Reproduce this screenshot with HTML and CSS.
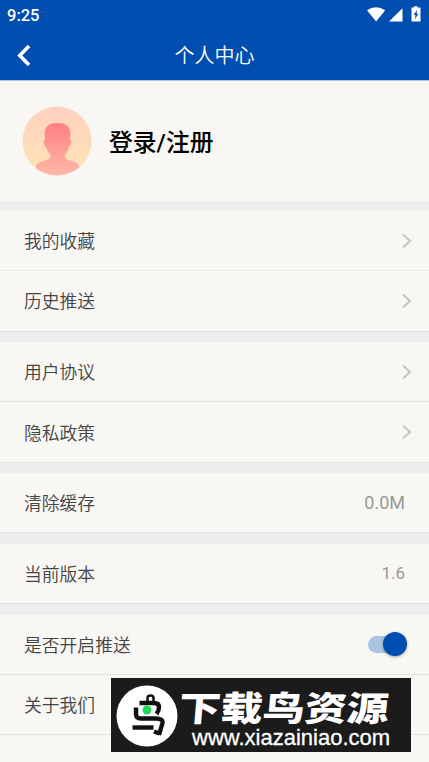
FILE: index.html
```html
<!DOCTYPE html>
<html lang="zh-CN">
<head>
  <meta charset="UTF-8">
  <meta name="viewport" content="width=device-width, initial-scale=1.0">
  <title>个人中心</title>
  <link rel="stylesheet" href="styles.css">
</head>
<body>
  <div class="page">
    <header class="header">
      <div class="status-bar">
        <span class="clock">9:25</span>
        <svg class="status-icons" width="56" height="18" viewBox="0 0 56 18">
          <path d="M1 4.3Q10-1.800 19.200 4.300L10.100 15.500Z" fill="#fff"/>
          <path d="M36.500 2.300V15.500H23Z" fill="#fff"/>
          <path d="M48 .3H51.500V1.500H54.500V15.500H45.500V1.500H48Z" fill="#fff"/>
          <path d="M51.200 3.800L47.600 9H49.600L48.800 13.200L52.500 7.800H50.500Z" fill="#004eaf"/>
        </svg>
      </div>
      <div class="nav-bar">
        <svg class="back" width="14" height="22" viewBox="0 0 14 22">
          <path d="M12 1L2.800 10.500L12 20" fill="none" stroke="#fff" stroke-width="3.600"/>
        </svg>
        <h1>个人中心</h1>
      </div>
    </header>

    <section class="profile">
      <svg class="avatar" width="70" height="70" viewBox="0 0 70 70">
        <defs>
          <linearGradient id="skin" x1="0" y1="0" x2="0" y2="1">
            <stop offset="0" stop-color="#ffd0c0"/>
            <stop offset="1" stop-color="#ffe5b4"/>
          </linearGradient>
          <linearGradient id="person" x1="0" y1="0" x2="0" y2="1">
            <stop offset="0" stop-color="#ff8080"/>
            <stop offset="1" stop-color="#ffb9aa"/>
          </linearGradient>
          <clipPath id="round"><circle cx="35" cy="35" r="34.500"/></clipPath>
        </defs>
        <circle cx="35" cy="35" r="34.500" fill="url(#skin)"/>
        <path clip-path="url(#round)" fill="url(#person)" d="M35.500 17C43 17 48.500 20 48.300 28L48 33.500C50.200 33.500 49.500 40 46.800 41C46 44.500 44.500 47 42.800 48.500V50.500C43 53 46 53.800 50 55C54 56.300 56.500 57.500 57 60.500V70H14V60.500C14.500 57.500 17 56.300 21 55C25 53.800 28.200 53 28.400 50.500V48.500C26.500 47 25 44.500 24.200 41C21.500 40 20.800 33.500 23 33.500L22.700 28C22.500 20 28 17 35.500 17Z"/>
      </svg>
      <span class="login">登录/注册</span>
    </section>

    <main class="menu">
      <section class="group">
        <div class="row faint">
          <span class="label">我的收藏</span>
          <svg class="arrow" width="12" height="18" viewBox="0 0 12 18"><path d="M2 2.500L9 9L2 15.500"/></svg>
        </div>
        <div class="row">
          <span class="label">历史推送</span>
          <svg class="arrow" width="12" height="18" viewBox="0 0 12 18"><path d="M2 2.500L9 9L2 15.500"/></svg>
        </div>
      </section>
      <section class="group">
        <div class="row">
          <span class="label">用户协议</span>
          <svg class="arrow" width="12" height="18" viewBox="0 0 12 18"><path d="M2 2.500L9 9L2 15.500"/></svg>
        </div>
        <div class="row">
          <span class="label">隐私政策</span>
          <svg class="arrow" width="12" height="18" viewBox="0 0 12 18"><path d="M2 2.500L9 9L2 15.500"/></svg>
        </div>
      </section>
      <section class="group">
        <div class="row">
          <span class="label">清除缓存</span>
          <span class="value">0.0M</span>
        </div>
      </section>
      <section class="group">
        <div class="row">
          <span class="label">当前版本</span>
          <span class="value version">1.6</span>
        </div>
      </section>
      <section class="group">
        <div class="row">
          <span class="label">是否开启推送</span>
          <span class="switch"><span class="thumb"></span></span>
        </div>
        <div class="row">
          <span class="label">关于我们</span>
        </div>
      </section>
    </main>

    <aside class="banner">
      <svg class="bird" width="62" height="62" viewBox="0 0 62 62">
        <circle cx="31" cy="31" r="30.500" fill="#fff"/>
        <g fill="none" stroke="#111" stroke-width="4.400" stroke-linejoin="round">
          <path d="M31.500 16V13Q31.500 10.500 34.500 10.500Q37.500 10.500 37.500 13V16" stroke-width="2.500"/>
          <path d="M23.500 18H38Q43 18 43 22Q43 26 40.500 29"/>
          <path d="M20 22.500V29Q20 33.500 25 33.500H40Q47 33.500 46.500 38L43 50"/>
          <path d="M16.500 42.500H37.500"/>
          <path d="M38 46.500L43.500 48.500"/>
        </g>
        <circle cx="31" cy="25" r="4.500" fill="#22d85a"/>
      </svg>
      <div class="banner-text">
        <strong>下载鸟资源</strong>
        <span>www.xiazainiao.com</span>
      </div>
    </aside>
  </div>
</body>
</html>
```

FILE: styles.css
```css
* {
  box-sizing: border-box;
}

body {
  margin: 0;
  background: #f8f7f3;
  color: #444;
  font-family: Roboto, "Noto Sans CJK SC", sans-serif;
}

.page {
  position: relative;
  height: 762px;
  overflow: hidden;
}

.header {
  height: 81px;
  background: #004eaf;
  border-bottom: 1px solid #b5c4da;
  color: #fff;
}

.status-bar {
  display: flex;
  justify-content: space-between;
  height: 30px;
  padding: 6px 7px 0;
}

.clock {
  font-size: 16.5px;
  font-weight: 500;
  line-height: 19px;
}

.nav-bar {
  display: grid;
  grid-template-columns: 32px 1fr 32px;
  align-items: center;
  height: 51px;
  padding: 0 17px;
}

.nav-bar h1 {
  margin: 0;
  font-size: 20px;
  font-weight: 350;
  line-height: 30px;
  text-align: center;
}

.profile {
  display: flex;
  align-items: center;
  gap: 17px;
  height: 119.6px;
  padding-left: 22px;
}

.login {
  color: #000;
  font-size: 23.8px;
  font-weight: 500;
}

.group {
  padding-top: 10.45px;
  background: #ededed;
}

.row {
  display: flex;
  align-items: center;
  justify-content: space-between;
  height: 60.3px;
  padding: 0 24px;
  background: #f8f7f3;
  border-bottom: 1px solid #e3e3e1;
  font-size: 17.8px;
  font-weight: 350;
}

.row.faint {
  border-color: #ecebe8;
}

.label {
  padding-bottom: 1px;
}

.arrow {
  margin-right: -7.5px;
  fill: none;
  stroke: #c7c7c7;
  stroke-width: 2.2;
}

.value {
  color: #999;
  font-size: 18px;
  font-weight: 400;
}

.version {
  font-size: 17px;
}

.switch {
  display: flex;
  align-items: center;
  justify-content: flex-end;
  width: 37px;
  height: 17px;
  border-radius: 9px;
  background: #abc4e1;
}

.thumb {
  flex: none;
  width: 24px;
  height: 24px;
  margin-right: -2px;
  border-radius: 50%;
  background: #004eaf;
  box-shadow: 0 1px 3px rgba(0, 0, 0, 0.35);
}

.banner {
  position: absolute;
  left: 111px;
  top: 678px;
  display: flex;
  align-items: center;
  gap: 3px;
  width: 300px;
  height: 74px;
  padding: 2px 0 0 5px;
  background: #1b1b1b;
  color: #fff;
}

.banner-text {
  display: flex;
  flex-direction: column;
}

.banner strong {
  font-family: "Noto Sans CJK SC", sans-serif;
  font-size: 42px;
  font-weight: 900;
  line-height: 40px;
  white-space: nowrap;
  transform: translate(-2px, 3px) skewX(-5deg) scaleY(0.82);
}

.banner-text span {
  padding: 3px 0 0 11px;
  font-family: "Liberation Sans", Arial, sans-serif;
  font-size: 22px;
  line-height: 24px;
  -webkit-text-stroke: 0.3px #fff;
}
```
